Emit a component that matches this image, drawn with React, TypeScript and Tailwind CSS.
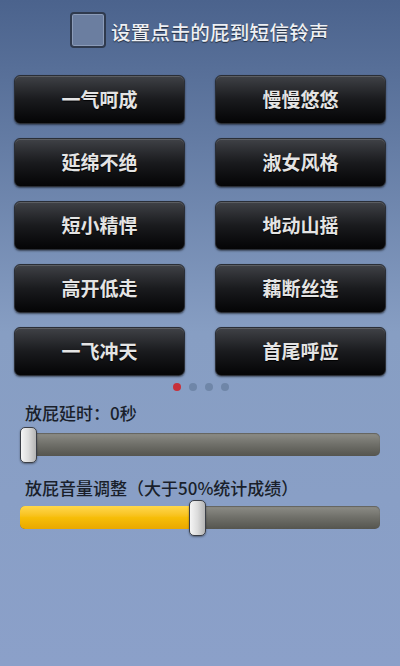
import React from "react";

const font = { fontFamily: '"Noto Sans CJK SC", "Noto Sans", sans-serif' };

const labels = [
  ["一气呵成", "慢慢悠悠"],
  ["延绵不绝", "淑女风格"],
  ["短小精悍", "地动山摇"],
  ["高开低走", "藕断丝连"],
  ["一飞冲天", "首尾呼应"],
];

function Btn({ text }: { text: string }) {
  return (
    <div className="h-[49px] w-[171px] rounded-[6px] border border-[#2a2e36] bg-gradient-to-b from-[#404247] via-[#1a1b1e] to-[#050506] shadow-[0_1px_2px_rgba(0,0,0,0.5),inset_0_1px_0_rgba(255,255,255,0.15)] flex items-center justify-center">
      <span className="text-[19px] text-[#e4e4e4] font-semibold [text-shadow:0_1px_1px_rgba(0,0,0,0.9)]">{text}</span>
    </div>
  );
}

function Thumb() {
  return (
    <div className="w-[17px] h-[36px] rounded-[5px] border-[1.5px] border-[#3b3f47] bg-gradient-to-r from-[#f5f5f5] via-[#dcdcdc] to-[#b4b4b4] shadow-[0_1px_2px_rgba(0,0,0,0.4)]" />
  );
}

export default function App() {
  return (
    <div
      className="w-[400px] h-[666px] overflow-hidden bg-gradient-to-b from-[#4b638d] via-[#879ec3] to-[#8ba0c9] flex flex-col"
      style={font}
    >
      <div className="flex items-center pt-[12px] pl-[70px] gap-[5px]">
        <div className="w-[36px] h-[36px] rounded-[4px] border-2 border-[#2f3a4e] bg-[#6b7ea0] shadow-[inset_0_0_0_1px_rgba(160,175,200,0.6)]" />
        <span className="text-[19.5px] text-[#eef0f4] [text-shadow:0_1px_1px_rgba(0,0,0,0.6)] font-medium tracking-[0.3px] mt-[3px]">设置点击的屁到短信铃声</span>
      </div>
      <div className="flex flex-col gap-[14px] mt-[27px] px-[14px]">
        {labels.map((row, i) => (
          <div key={i} className="flex justify-between">
            <Btn text={row[0]} />
            <Btn text={row[1]} />
          </div>
        ))}
      </div>
      <div className="flex justify-center gap-[8px] mt-[7px] pl-[1px]">
        <div className="w-[8px] h-[8px] rounded-full bg-[#c8303a]" />
        <div className="w-[8px] h-[8px] rounded-full bg-[#6f86a8]" />
        <div className="w-[8px] h-[8px] rounded-full bg-[#6f86a8]" />
        <div className="w-[8px] h-[8px] rounded-full bg-[#6f86a8]" />
      </div>
      <div className="pl-[25px] mt-[10px] text-[17px] leading-[24px] font-medium text-[#1a1f2b]">放屁延时：0秒</div>
      <div className="relative mx-[20px] mt-[8px] h-[23px] rounded-[5px] bg-gradient-to-b from-[#8e8e88] via-[#6f6f69] to-[#55554f] shadow-[inset_0_1px_1px_rgba(0,0,0,0.3)]">
        <div className="absolute left-0 top-[-6px]">
          <Thumb />
        </div>
      </div>
      <div className="pl-[25px] mt-[20px] text-[17px] leading-[24px] font-medium text-[#1a1f2b]">放屁音量调整（大于50%统计成绩）</div>
      <div className="relative mx-[20px] mt-[6px] h-[23px] rounded-[5px] bg-gradient-to-b from-[#8e8e88] via-[#6f6f69] to-[#55554f] shadow-[inset_0_1px_1px_rgba(0,0,0,0.3)]">
        <div className="absolute left-0 top-0 h-[23px] w-[175px] rounded-l-[5px] bg-gradient-to-b from-[#ffd84a] via-[#f7be08] to-[#e9a800]" />
        <div className="absolute left-[169px] top-[-6px]">
          <Thumb />
        </div>
      </div>
    </div>
  );
}
